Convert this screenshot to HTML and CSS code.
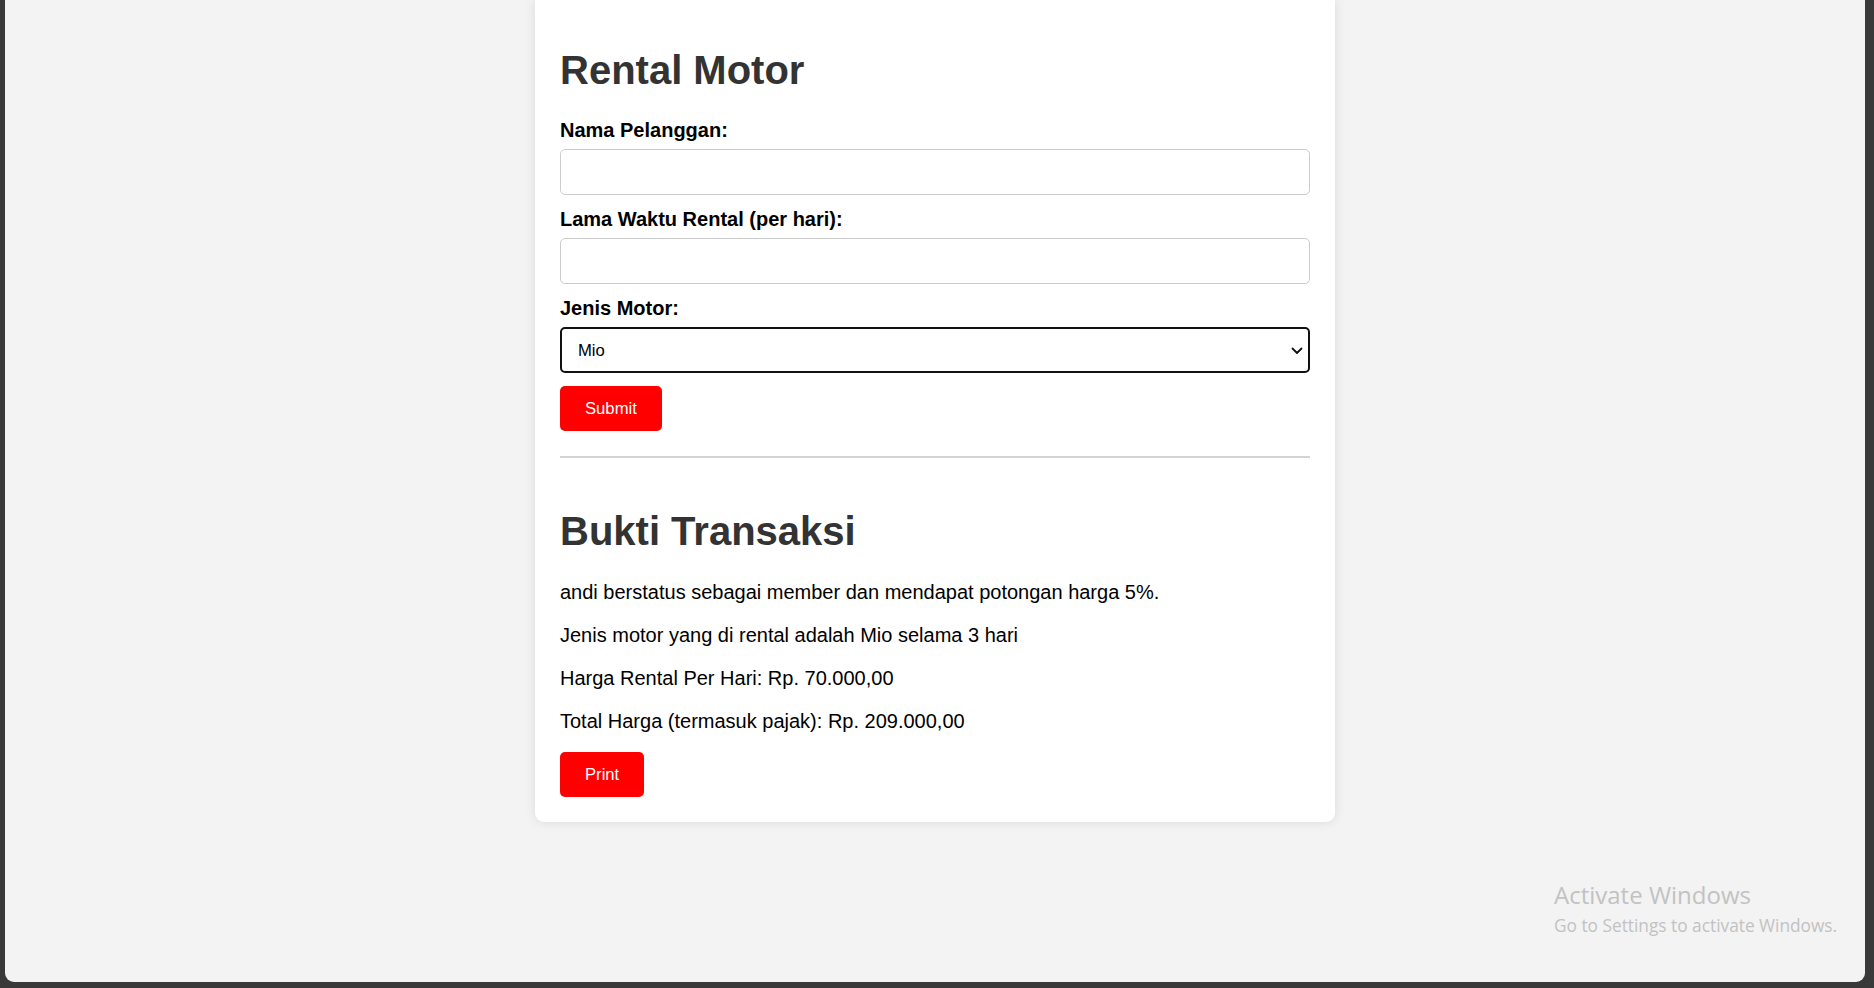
FILE: index.html
```html
<!DOCTYPE html>
<html lang="id">
<head>
<meta charset="utf-8">
<title>Rental Motor</title>
<link rel="stylesheet" href="styles.css">
</head>
<body>
<div class="screen">
  <div class="page">
    <div class="card">
      <h1 class="title">Rental Motor</h1>
      <form class="form">
        <label class="label">Nama Pelanggan:</label>
        <input class="field" type="text">
        <label class="label">Lama Waktu Rental (per hari):</label>
        <input class="field" type="text">
        <label class="label">Jenis Motor:</label>
        <div class="select-wrap">
          <select class="field select">
            <option>Mio</option>
          </select>
          <svg class="chevron" width="12" height="8" viewBox="0 0 12 8"><path d="M1.5 1.5 L6 6 L10.5 1.5" fill="none" stroke="#111" stroke-width="1.8" stroke-linecap="round" stroke-linejoin="round"/></svg>
        </div>
        <button type="button" class="btn">Submit</button>
      </form>
      <div class="rule"></div>
      <div class="result">
        <h1 class="title title-result">Bukti Transaksi</h1>
        <p class="line">andi berstatus sebagai member dan mendapat potongan harga 5%.</p>
        <p class="line">Jenis motor yang di rental adalah Mio selama 3 hari</p>
        <p class="line">Harga Rental Per Hari: Rp. 70.000,00</p>
        <p class="line">Total Harga (termasuk pajak): Rp. 209.000,00</p>
        <button type="button" class="btn btn-print">Print</button>
      </div>
    </div>
  </div>
  <div class="activate">
    <div class="activate-title">Activate Windows</div>
    <div class="activate-sub">Go to Settings to activate Windows.</div>
  </div>
</div>
</body>
</html>
```

FILE: styles.css
```css
html, body {
  margin: 0;
  padding: 0;
  height: 100%;
}
body {
  background: #393939;
  font-family: "Liberation Sans", Arial, sans-serif;
  color: #000;
  overflow: hidden;
}
.screen {
  position: relative;
  margin-left: 5px;
  width: 1860px;
  height: 982px;
  background: #f3f3f3;
  border-radius: 0 0 9px 9px;
  overflow: hidden;
}
.page {
  display: flex;
  justify-content: center;
}
.card {
  box-sizing: border-box;
  width: 800px;
  background: #fff;
  border-radius: 0 0 9px 9px;
  box-shadow: 0 0 12px rgba(0, 0, 0, 0.1);
  padding: 21px 25px 25px;
}
.title {
  font-size: 40px;
  line-height: 46px;
  font-weight: bold;
  color: #333;
  margin: 26px 0 26px;
}
.form {
  display: flex;
  flex-direction: column;
  align-items: flex-start;
}
.label {
  display: block;
  font-size: 20px;
  line-height: 23px;
  font-weight: bold;
  margin-bottom: 7px;
}
.field {
  box-sizing: border-box;
  width: 100%;
  height: 46px;
  margin: 0 0 13px;
  padding: 0 12px;
  border: 1px solid #cccccc;
  border-radius: 5px;
  font-family: "Liberation Sans", Arial, sans-serif;
  font-size: 16.67px;
  background: #fff;
  outline: none;
}
.select-wrap {
  position: relative;
  width: 100%;
}
.select {
  -webkit-appearance: none;
  appearance: none;
  border: 2.5px solid #111;
  border-radius: 5px;
  padding-left: 16px;
  color: #000;
}
.chevron {
  position: absolute;
  right: 7px;
  top: 20px;
}
.btn {
  box-sizing: border-box;
  height: 45px;
  padding: 0 25px;
  border: none;
  border-radius: 5px;
  background: #ff0000;
  color: #fff;
  font-family: "Liberation Sans", Arial, sans-serif;
  font-size: 16.67px;
}
.rule {
  height: 0;
  border-top: 2px solid #d4d4d4;
  margin: 25px 0 0;
}
.result {
  padding-top: 50px;
}
.title-result {
  margin: 0 0 27px;
}
.line {
  font-size: 20px;
  line-height: 23px;
  margin: 0 0 20px;
}
.btn-print {
  margin-top: -1px;
}
.activate {
  position: absolute;
  left: 1549px;
  top: 879px;
  font-family: "Open Sans", "Noto Sans", sans-serif;
  color: #c2c2c2;
}
.activate-title {
  font-size: 24px;
  line-height: 32px;
}
.activate-sub {
  font-size: 17.3px;
  line-height: 26px;
  margin-top: 2px;
}
```
